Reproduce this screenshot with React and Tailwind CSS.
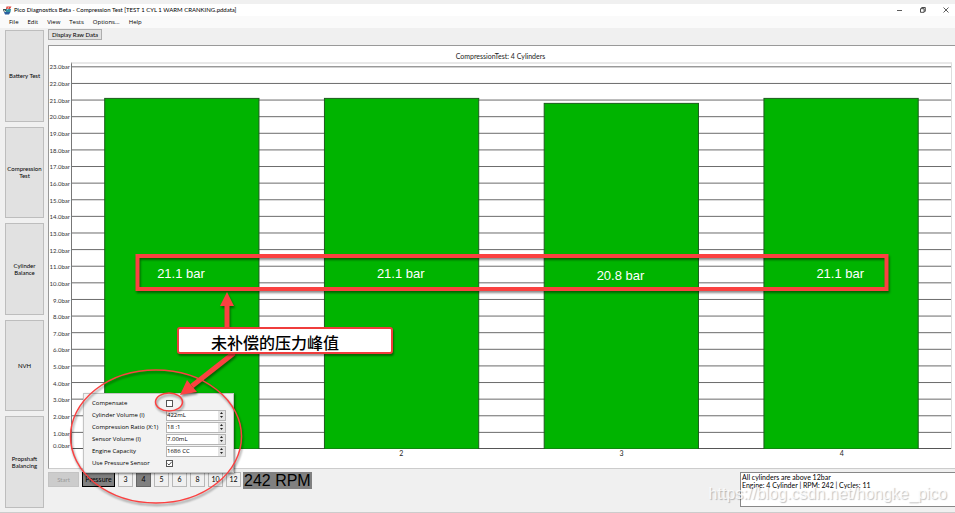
import React from "react";

const tests = ["Battery Test", "Compression Test", "Cylinder Balance", "NVH", "Propshaft Balancing"];
const menus = ["File", "Edit", "View", "Tests", "Options...", "Help"];
const cylinderCounts = ["3", "4", "5", "6", "8", "10", "12"];
const readings = [21.1, 21.1, 20.8, 21.1];
const AXIS_MAX = 23.17;
const ticks = Array.from({ length: 23 }, (_, i) => 23 - i);

function AppIcon() {
  return (
    <svg width="9" height="9" viewBox="0 0 9 9" aria-hidden="true">
      <path d="M3.500 0.500h5l-1.500 2.500H3z" fill="#e0443c" />
      <path d="M0 3h3v2.500H0.500z" fill="#3b4a4a" />
      <path d="M3 3h5L7.500 6H2.500z" fill="#2f8f9f" />
      <path d="M1 6h6.500L6 8.500H2z" fill="#2b5f9e" />
      <path d="M1 4l2 2M5.500 1l-1 3" stroke="#e8f0ee" strokeWidth="0.7" />
    </svg>
  );
}

function TitleBar() {
  return (
    <header className="flex h-3 items-center bg-white pl-[3px] pr-[6px]">
      <AppIcon />
      <h1 className="ml-[2px] flex-1 whitespace-nowrap text-[6px] leading-3 text-black">
        Pico Diagnostics Beta - Compression Test [TEST 1 CYL 1 WARM CRANKING.pddata]
      </h1>
      <div className="flex items-center gap-[17px]">
        <button aria-label="Minimize" className="block">
          <svg width="6" height="6" viewBox="0 0 6 6"><path d="M0 3.5h5" stroke="#333" strokeWidth="0.8" /></svg>
        </button>
        <button aria-label="Restore" className="block">
          <svg width="6" height="6" viewBox="0 0 6 6" fill="none" stroke="#222" strokeWidth="0.8">
            <path d="M0.5 1.7h3.6v3.6H0.5zM1.7 1.5V0.5h3.6v3.8H4.3" />
          </svg>
        </button>
        <button aria-label="Close" className="block">
          <svg width="6" height="6" viewBox="0 0 6 6"><path d="M0.5 0.5l5 5M5.5 0.5l-5 5" stroke="#333" strokeWidth="0.8" /></svg>
        </button>
      </div>
    </header>
  );
}

function Chart() {
  return (
    <section className="flex min-h-0 flex-1 flex-col border-l border-t border-b border-[#999] border-b-[#ccc] bg-white pr-[3px]">
      <h2 className="pt-1 text-center text-[7px] leading-3 text-[#222]">CompressionTest: 4 Cylinders</h2>
      <div className="flex min-h-0 flex-1">
        <div className="flex w-[22px] flex-col pr-px text-right text-[6px] leading-[6px] text-[#333]">
          <div className="-mt-[3px] flex min-h-0 flex-1 flex-col">
            {ticks.map((t) => (
              <span key={t} className="flex flex-1 items-center justify-end">{t}.0bar</span>
            ))}
          </div>
          <span className="pt-px">0.0bar</span>
        </div>
        <svg className="min-w-0 flex-1 border-l border-t-2 border-r border-l-[#777] border-r-[#ddd] border-t-[#e8e8e8]" width="100%" height="100%">
          {ticks.map((t) => (
            <line key={t} x1="0" x2="100%" y1={`${100 - (t / AXIS_MAX) * 100}%`} y2={`${100 - (t / AXIS_MAX) * 100}%`} stroke="#6b6b6b" />
          ))}
          <line x1="0" x2="100%" y1="100%" y2="100%" stroke="#555" strokeWidth="2" />
          {readings.map((v, i) => (
            <g key={i}>
              <rect x={`${i * 25 + 3.72}%`} y={`${100 - (v / AXIS_MAX) * 100}%`} width="17.55%" height={`${(v / AXIS_MAX) * 100}%`} fill="#00b400" stroke="#1c5c1c" />
              <text x={`${i * 25 + 12.4}%`} y={`${100 - (v / AXIS_MAX) * 50}%`} dy="4" textAnchor="middle" fontSize="13" fill="#fff" className="font-['Liberation_Sans',Arial,sans-serif]">
                {v.toFixed(1)} bar
              </text>
            </g>
          ))}
        </svg>
      </div>
      <div className="ml-[22px] grid h-[19px] grid-cols-4 text-center text-[7px] leading-[8px] text-[#222]">
        {readings.map((_, i) => <span key={i}>{i + 1}</span>)}
      </div>
    </section>
  );
}

function SpinField({ id, label, value }) {
  return (
    <div className="flex h-3 items-center">
      <label htmlFor={id} className="w-[74px]">{label}</label>
      <div className="flex h-[11px] w-[60px] border border-[#b5b5b5] bg-white">
        <input id={id} defaultValue={value} className="w-0 min-w-0 flex-1 bg-white pb-px text-[6px] leading-[8px] outline-none" />
        <div className="flex w-[7px] flex-col bg-[#e4e4e4]">
          <button aria-label={`Increase ${label}`} className="flex flex-1 items-center justify-center">
            <svg width="3" height="2"><path d="M0 2L1.5 0L3 2z" fill="#222" /></svg>
          </button>
          <button aria-label={`Decrease ${label}`} className="flex flex-1 items-center justify-center">
            <svg width="3" height="2"><path d="M0 0L1.5 2L3 0z" fill="#222" /></svg>
          </button>
        </div>
      </div>
    </div>
  );
}

function TickField({ id, label, checked }) {
  return (
    <div className="flex h-3 items-center">
      <label htmlFor={id} className="w-[74px]">{label}</label>
      <span className="relative flex">
        <input id={id} type="checkbox" defaultChecked={checked} className="peer size-[7px] appearance-none border border-[#555] bg-white" />
        <svg className="pointer-events-none absolute inset-0 hidden peer-checked:block" width="7" height="7" viewBox="0 0 7 7">
          <path d="M1.5 3.5L3 5L5.7 1.8" fill="none" stroke="#222" strokeWidth="0.8" />
        </svg>
      </span>
    </div>
  );
}

function PressurePanel() {
  return (
    <form className="absolute bottom-[39px] left-[35px] w-[151px] border border-[#c4c4c4] bg-[#f2f2f2] py-[3px] pl-2 font-['Open_Sans',sans-serif] text-[6px] leading-3 text-black shadow-[1px_1px_2px_rgba(0,0,0,0.5)]">
      <TickField id="compensate" label="Compensate" checked={false} />
      <SpinField id="volume" label="Cylinder Volume (l)" value="422mL" />
      <SpinField id="ratio" label="Compression Ratio (X:1)" value="18 :1" />
      <SpinField id="sensor" label="Sensor Volume (l)" value="7.00mL" />
      <SpinField id="capacity" label="Engine Capacity" value="1686 CC" />
      <TickField id="use-sensor" label="Use Pressure Sensor" checked />
    </form>
  );
}

function Controls() {
  return (
    <footer className="relative flex h-[43px] items-start pt-[3px] text-[7px]">
      <PressurePanel />
      <button disabled className="h-[15px] w-[31px] border border-[#c4c4c4] bg-[#ccc] text-[6px] text-[#999]">Start</button>
      <button className="ml-[3px] h-[15px] w-[33px] border border-black bg-[#808080] text-[7px] text-black">Pressure</button>
      <div className="ml-[3px] flex gap-[3px]">
        {cylinderCounts.map((n) => (
          <button
            key={n}
            className={n === "4"
              ? "h-[15px] w-[15px] border border-[#666] bg-[#808080] text-[7px] text-black"
              : "h-[15px] w-[15px] border border-[#b8b8b8] bg-[#f0f0f0] text-[7px] text-black"}
          >
            {n}
          </button>
        ))}
      </div>
      <output className="ml-[2px] h-[17px] w-[69px] whitespace-nowrap bg-[#808080] pl-px font-['Liberation_Sans',Arial,sans-serif] text-[16px] leading-[17px] text-black">242 RPM</output>
      <textarea
        readOnly
        aria-label="Results"
        className="ml-auto h-[35px] w-[215px] resize-none overflow-hidden border border-r-0 border-[#888] bg-white px-px text-[7px] leading-[8px] text-black outline-none"
        value={"All cylinders are above 12bar\nEngine: 4 Cylinder | RPM: 242 | Cycles: 11"}
      />
    </footer>
  );
}

function Annotations() {
  return (
    <div className="pointer-events-none absolute inset-0 overflow-hidden">
      <svg className="absolute inset-0 drop-shadow-[1px_2px_1px_rgba(0,0,0,0.45)]" width="100%" height="100%" fill="none" stroke="#fb4141">
        <rect x="137.5" y="256" width="749" height="33" strokeWidth="4" />
        <path d="M227 328V304" strokeWidth="5" />
        <path d="M227 292L234 306H220z" fill="#fb4141" stroke="none" />
        <path d="M234 353L192 386" strokeWidth="5" />
        <path d="M180 395L187 380L197 392z" fill="#fb4141" stroke="none" />
        <ellipse cx="156" cy="436.500" rx="85.500" ry="66.500" strokeWidth="1.500" />
        <ellipse cx="169" cy="402" rx="13.500" ry="9" strokeWidth="1.500" />
      </svg>
      <p className="absolute left-[177px] top-[327px] h-[27px] w-[216px] rounded-[3px] border-2 border-[#f03c3c] bg-white pl-8 font-['Noto_Sans_CJK_SC',sans-serif] text-[16px] font-medium leading-[26px] text-black shadow-[1px_2px_2px_rgba(0,0,0,0.4)]">
        未补偿的压力峰值
      </p>
      <p className="absolute bottom-2 right-2 whitespace-nowrap font-['Liberation_Sans',Arial,sans-serif] text-[16px] leading-5 text-white/80 [text-shadow:1px_1px_1px_rgba(0,0,0,0.25)]">
        https://blog.csdn.net/hongke_pico
      </p>
    </div>
  );
}

export default function App() {
  return (
    <div className="relative flex h-screen flex-col overflow-hidden border-b border-[#ccc] bg-[#f0f0f0] pt-1 font-['Lato',sans-serif]">
      <TitleBar />
      <nav className="flex h-3 items-center gap-[9px] bg-[#fafafa] pl-[9px] font-['Open_Sans',sans-serif] text-[6px] text-black">
        {menus.map((m) => <button key={m} className="leading-3">{m}</button>)}
      </nav>
      <main className="flex min-h-0 flex-1">
        <aside className="flex w-12 flex-col gap-[5px] pb-1 pl-[5px] pr-1 pt-[2px]">
          {tests.map((t) => (
            <button key={t} className="flex-1 border border-[#bdbdbd] bg-[#e1e1e1] text-[6px] leading-[7px] text-black">{t}</button>
          ))}
        </aside>
        <div className="flex min-w-0 flex-1 flex-col">
          <div className="flex h-[17px] items-start pt-px">
            <button className="h-[11px] w-[54px] whitespace-nowrap border border-[#adadad] bg-[#e1e1e1] text-[6px] leading-[9px] text-black">Display Raw Data</button>
          </div>
          <Chart />
          <Controls />
        </div>
      </main>
      <Annotations />
    </div>
  );
}
